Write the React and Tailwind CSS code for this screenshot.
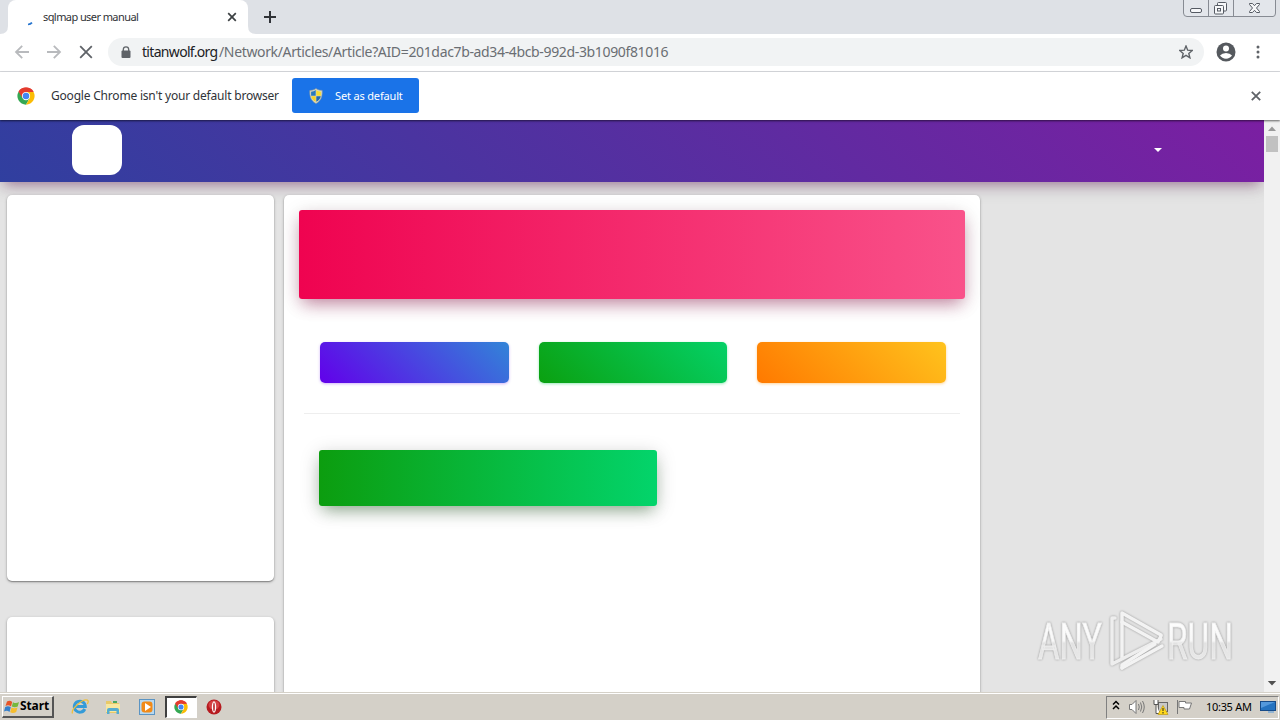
import React from "react";

function ChromeLogo({ size }) {
  return (
    <svg width={size} height={size} viewBox="0 0 48 48" className="shrink-0">
      <path d="M24 24L4.1 12.5A23 23 0 0 1 43.9 12.5Z" fill="#ea4335" />
      <path d="M4.1 12.5A23 23 0 0 0 24 47L34 29.5H24Z" fill="#34a853" />
      <path d="M43.9 12.5A23 23 0 0 1 24 47L34 29.8L24 13Z" fill="#fbbc05" />
      <path d="M24 13H44.2L43.9 12.5A23 23 0 0 0 4.1 12.5L14.5 29.5Z" fill="#e33b2e" />
      <circle cx="24" cy="24" r="11" fill="#fff" />
      <circle cx="24" cy="24" r="8.7" fill="#4285f4" />
    </svg>
  );
}

function Shield() {
  return (
    <svg width="14" height="16" viewBox="0 0 14 16" className="shrink-0">
      <path d="M7 .5C5 2 3 2.400 .8 2.400C.6 8 1.500 12.500 7 15.500C12.500 12.500 13.400 8 13.200 2.400C11 2.400 9 2 7 .5Z" fill="#d9d8c5" stroke="#8d9a9a" strokeWidth=".6" />
      <path d="M6.700 2V7.700H2.100V3.700Q5 3.500 6.700 2Z" fill="#2879bd" />
      <path d="M7.300 2V7.700H11.900V3.700Q9 3.500 7.300 2Z" fill="#f6dc31" />
      <path d="M6.700 8.300V13.800Q3 12 2.200 8.300Z" fill="#f6d326" />
      <path d="M7.300 8.300V13.800Q11 12 11.800 8.300Z" fill="#2369ad" />
    </svg>
  );
}

function TabStrip() {
  return (
    <div className="flex h-[34px] items-start justify-between bg-[#dee1e6]">
      <div className="flex h-[34px]">
        <svg width="8" height="34"><path d="M0 34Q8 34 8 26V34Z" fill="#fff" /></svg>
        <div className="flex h-[34px] w-[240px] items-center rounded-t-lg bg-white pl-[17px]">
          <svg width="12" height="12" viewBox="0 0 12 12" className="mt-2 shrink-0">
            <path d="M3 9.500Q5.500 9.300 7 7.700" stroke="#2775cf" strokeWidth="1.700" fill="none" />
          </svg>
          <span className="mb-[2px] w-[190px] pl-[6px] text-[11px] tracking-[-0.580px] whitespace-nowrap text-[#303236]">sqlmap user manual</span>
          <svg width="10" height="10" viewBox="0 0 10 10" className="shrink-0">
            <path d="M1.200 1.200L8.800 8.800M8.800 1.200L1.200 8.800" stroke="#3c4043" strokeWidth="1.700" />
          </svg>
        </div>
        <svg width="8" height="34"><path d="M0 26Q0 34 8 34H0Z" fill="#fff" /></svg>
        <svg width="12" height="12" viewBox="0 0 12 12" className="mt-[11px] ml-2">
          <path d="M6 0V12M0 6H12" stroke="#303338" strokeWidth="2" />
        </svg>
      </div>
      <svg width="97" height="18" viewBox="0 0 97 18">
        <path d="M.5 0V13Q.5 16.500 4 16.500H90Q92.500 16.500 92.500 13V0M25.500 0V16M50.500 0V16" fill="#e3e6eb" stroke="#878b93" />
        <g fill="#f6f7f9" stroke="#555a63">
          <rect x="7.500" y="8.500" width="11" height="4" rx="1.500" />
          <rect x="34.500" y="2.500" width="9" height="8.500" rx="1" />
          <rect x="31.500" y="5.500" width="9" height="8.500" rx="1" />
          <rect x="34.500" y="8.500" width="3" height="2.500" />
          <path d="M66.500 3.500H69.500L71.500 5.700L73.500 3.500H76.500V4.500L73.500 8L76.500 11.500V12.500H73.500L71.500 10.300L69.500 12.500H66.500V11.500L69.500 8L66.500 4.500Z" />
        </g>
      </svg>
    </div>
  );
}

function Toolbar() {
  return (
    <div className="flex h-[38px] items-center border-b border-[#dadce0] bg-white pb-px pl-[14px]">
      <svg width="16" height="16" viewBox="0 0 16 16" fill="none" stroke="#b8babd" strokeWidth="1.800">
        <path d="M15 8H2.500M8.200 1.800L2 8L8.200 14.200" />
      </svg>
      <svg width="16" height="16" viewBox="0 0 16 16" fill="none" stroke="#b8babd" strokeWidth="1.800" className="ml-4">
        <path d="M1 8H13.500M7.800 1.800L14 8L7.800 14.200" />
      </svg>
      <svg width="14" height="14" viewBox="0 0 14 14" className="ml-[17px]">
        <path d="M1.200 1.200L12.800 12.800M12.800 1.200L1.200 12.800" stroke="#5f6368" strokeWidth="1.800" />
      </svg>
      <div className="ml-[15px] flex h-7 w-[1096px] items-center rounded-full bg-[#f1f3f4] pr-[11px] pl-[13px]">
        <svg width="10" height="13" viewBox="0 0 10 13" className="shrink-0">
          <path d="M2.300 5.500V3.500A2.700 2.700 0 0 1 7.700 3.500V5.500" fill="none" stroke="#5f6368" strokeWidth="1.300" />
          <rect x=".5" y="4.500" width="9" height="7.500" rx="1" fill="#5f6368" />
        </svg>
        <div className="ml-[11px] flex flex-1 text-[14px] whitespace-nowrap text-[#6a6e73]">
          <span className="w-[77px] tracking-[-0.680px] text-[#202124]">titanwolf.org</span>
          <span className="tracking-[-0.350px]">/Network/Articles/Article?AID=201dac7b-ad34-4bcb-992d-3b1090f81016</span>
        </div>
        <svg width="14" height="14" viewBox="0 0 14 14" className="shrink-0">
          <path d="M7 1L8.700 5.200L13.200 5.500L9.800 8.400L10.900 12.800L7 10.400L3.100 12.800L4.200 8.400L.8 5.500L5.300 5.200Z" fill="none" stroke="#5f6368" strokeWidth="1.400" />
        </svg>
      </div>
      <svg width="20" height="20" viewBox="0 0 20 20" className="ml-3">
        <circle cx="10" cy="10" r="9.500" fill="#55595e" />
        <circle cx="10" cy="6.500" r="3" fill="#fff" />
        <path d="M4 13.600Q6 11 10 11T16 13.600Q14 16.700 10 16.700T4 13.600Z" fill="#fff" />
      </svg>
      <svg width="4" height="14" viewBox="0 0 4 14" className="ml-[20px]" fill="#5f6368">
        <circle cx="2" cy="2" r="1.500" /><circle cx="2" cy="7" r="1.500" /><circle cx="2" cy="12" r="1.500" />
      </svg>
    </div>
  );
}

function InfoBar() {
  return (
    <div className="relative z-10 flex h-12 items-center bg-white pl-[17px] shadow-[0_1px_2px_rgba(0,0,0,0.600)]">
      <ChromeLogo size={18} />
      <span className="mb-px ml-4 w-[241px] text-[12px] tracking-[-0.200px] whitespace-nowrap text-[#303338]">Google Chrome isn't your default browser</span>
      <div className="mb-[1px] flex h-[35px] w-[127px] items-center rounded-[3px] bg-[#1a73e8] pl-[17px]">
        <Shield />
        <span className="mb-px ml-3 text-[11px] tracking-[-0.160px] whitespace-nowrap text-white">Set as default</span>
      </div>
      <svg width="10" height="10" viewBox="0 0 10 10" className="mr-[19px] ml-auto">
        <path d="M.8 .8L9.200 9.200M9.200 .8L.8 9.200" stroke="#5f6368" strokeWidth="1.800" />
      </svg>
    </div>
  );
}

function Watermark() {
  return (
    <svg width="226" height="76" viewBox="0 0 226 76" className="absolute top-[490px] left-[1030px] drop-shadow-[0_0_1px_rgba(0,0,0,0.350)]">
      <defs>
        <linearGradient id="mark" x1="0" y1="0" x2="0" y2="1">
          <stop offset="0" stopColor="#fff" /><stop offset=".48" stopColor="#f8f8f8" />
          <stop offset=".52" stopColor="#e2e2e2" /><stop offset="1" stopColor="#eeeeee" />
        </linearGradient>
      </defs>
      <g fill="url(#mark)" stroke="#efefef" strokeWidth=".8" fontFamily="Roboto, sans-serif" fontSize="50">
        <text x="8" y="49" textLength="64" lengthAdjust="spacingAndGlyphs">ANY</text>
        <text x="137" y="49" textLength="66" lengthAdjust="spacingAndGlyphs">RUN</text>
      </g>
      <g fill="none" stroke="#f3f3f3" strokeWidth="3.500" strokeLinejoin="round" strokeLinecap="round">
        <path d="M92 48V3L131 25" />
        <path d="M85 8H82V54L131 29" stroke="#eeeeee" />
        <path d="M92 12L128 32L131 26M92 58L132 36" />
        <path d="M92 58V55L125 34" />
      </g>
    </svg>
  );
}

function ScrollBar() {
  return (
    <div className="flex h-full w-4 flex-col items-center justify-between bg-[#f1f1f1]">
      <div className="flex flex-col items-center">
        <svg width="10" height="16" viewBox="0 0 10 16"><path d="M1 11L5 6.500L9 11Z" fill="#999" /></svg>
        <div className="h-4 w-3 bg-[#c1c1c1]" />
      </div>
      <svg width="10" height="16" viewBox="0 0 10 16"><path d="M.8 5H9.200L5 9.500Z" fill="#505050" /></svg>
    </div>
  );
}

function Page() {
  const card = "rounded-[5px] bg-white shadow-[0_1px_3px_rgba(0,0,0,0.300),0_1px_1px_rgba(0,0,0,0.250)]";
  return (
    <div className="relative flex h-[572px] bg-[#e4e4e4]">
      <div className="flex h-full w-[1264px] flex-col overflow-hidden">
        <div className="flex h-[62px] shrink-0 items-center justify-between bg-[linear-gradient(45deg,#303f9f,#7b1fa2)] pr-[101px] pl-[72px] shadow-[0_4px_20px_rgba(0,0,0,0.140),0_7px_12px_-5px_rgba(123,31,102,0.460)]">
          <div className="mb-[2px] size-[50px] rounded-xl bg-white" />
          <svg width="10" height="6" viewBox="0 0 10 6" className="mb-[2px]"><path d="M1 1H9L5 5Z" fill="#fff" /></svg>
        </div>
        <div className="flex flex-1 gap-[10px] pt-[13px] pl-[7px]">
          <div className="flex w-[267px] flex-col gap-9">
            <div className={card + " h-[386px] shrink-0"} />
            <div className={card + " h-[100px] shrink-0"} />
          </div>
          <div className={card + " h-[520px] w-[696px] px-[15px] pt-[15px]"}>
            <div className="h-[89px] rounded-[3px] bg-[linear-gradient(90deg,#ef0350,#f9528a)] shadow-[0_4px_20px_rgba(0,0,0,0.140),0_8px_16px_-4px_rgba(173,20,87,0.450)]" />
            <div className="mx-[5px] mt-[43px] flex h-[72px] gap-[30px] border-b border-[#eeeeee] pr-[14px] pl-4">
              <div className="h-[41px] flex-1 rounded-[5px] bg-[linear-gradient(45deg,#6200ea,#3284d8)] shadow-[0_1px_3px_rgba(98,0,234,0.300)]" />
              <div className="h-[41px] flex-1 rounded-[5px] bg-[linear-gradient(45deg,#0ba010,#04d167)] shadow-[0_1px_3px_rgba(0,200,83,0.400)]" />
              <div className="h-[41px] flex-1 rounded-[5px] bg-[linear-gradient(45deg,#ff7900,#ffc31d)] shadow-[0_1px_3px_rgba(255,150,0,0.400)]" />
            </div>
            <div className="mt-9 ml-5 h-14 w-[338px] rounded-[3px] bg-[linear-gradient(90deg,#0c9d0f,#03d46b)] shadow-[0_4px_20px_rgba(0,0,0,0.180),0_8px_16px_-5px_rgba(20,100,20,0.400)]" />
          </div>
        </div>
      </div>
      <ScrollBar />
      <Watermark />
    </div>
  );
}

function TaskBar() {
  return (
    <div className="flex h-7 items-center border-t border-[#d5d1c8] bg-[#d4d0c8] pr-[1px] pl-[2px] shadow-[inset_0_1px_0_#fff]">
      <div className="mt-px flex h-[22px] w-[52px] items-center border-t border-r-2 border-b-2 border-l border-t-white border-r-[#555] border-b-[#555] border-l-white pl-[1px]">
        <svg width="16" height="16" viewBox="0 0 16 16" className="shrink-0">
          <path d="M3 2.500Q6 .8 8.200 3L7 7.500Q4.500 5.500 1.500 7Z" fill="#e75426" />
          <path d="M9 3.200Q12 5 15 3L13.700 7.500Q11 9 7.800 7.600Z" fill="#76b83c" />
          <path d="M1.200 8Q4.200 6.400 6.800 8.300L5.500 13Q3 11 0 12.500Z" fill="#357fca" />
          <path d="M7.500 8.500Q10.500 10 13.500 8.400L12.200 13Q9 14.800 6.200 13.200Z" fill="#f6bd2e" />
        </svg>
        <span className="mb-px text-[12px] font-bold tracking-[-0.100px] text-black">Start</span>
      </div>
      <svg width="18" height="18" viewBox="0 0 18 18" className="mt-px ml-[17px]">
        <path d="M13.800 11A5.500 5.500 0 1 1 14.300 8.500H4" fill="none" stroke="#349bd8" strokeWidth="3" />
        <path d="M1.500 15.500C-.5 11 12 .2 16.500 2.200C17.700 3 17.200 4.500 16.200 6" fill="none" stroke="#efbf3c" strokeWidth="1.300" />
      </svg>
      <svg width="18" height="18" viewBox="0 0 18 18" className="mt-px ml-[15px]">
        <path d="M2 3H7L8 5H15V15H2Z" fill="#e8c968" /><path d="M2 6H16V14H2Z" fill="#f7e7a0" />
        <path d="M3 16V12Q3 10 5 10H13Q15 10 15 12V16H12.500V13H5.500V16Z" fill="#55acd0" />
        <path d="M9 4H13" stroke="#49a762" strokeWidth="2" />
      </svg>
      <svg width="18" height="18" viewBox="0 0 18 18" className="mt-px ml-[16px]">
        <rect x="1.500" y="1.500" width="15" height="15" fill="#b8d8ef" stroke="#5b94c3" />
        <rect x="3.500" y="3.500" width="11" height="11" rx="3" fill="#f18a18" /><path d="M7 5V13L13 9Z" fill="#fff" />
      </svg>
      <div className="ml-[9px] flex h-[22px] w-8 items-center justify-center border-t-2 border-r border-b border-l-2 border-t-[#404040] border-r-white border-b-white border-l-[#404040] bg-white pr-[2px]">
        <ChromeLogo size={14} />
      </div>
      <svg width="16" height="16" viewBox="0 0 16 16" className="ml-[9px]">
        <circle cx="8" cy="8" r="7.500" fill="#b61b20" /><ellipse cx="8" cy="6" rx="5.500" ry="4.500" fill="#d54043" />
        <ellipse cx="8" cy="8" rx="2.200" ry="5.800" fill="#fff" /><ellipse cx="8" cy="8" rx=".8" ry="4.500" fill="#b61b20" />
      </svg>
      <div className="mt-px ml-auto flex h-[23px] w-[173px] items-center border border-t-[#808080] border-r-white border-b-white border-l-[#808080] pl-[5px]">
        <svg width="8" height="10" viewBox="0 0 8 10" className="mb-1 shrink-0">
          <path d="M1 4.500L4 1.500L7 4.500M1 9L4 6L7 9" fill="none" stroke="#000" strokeWidth="1.500" />
        </svg>
        <svg width="18" height="16" viewBox="0 0 18 16" className="ml-[8px] shrink-0" stroke="#777">
          <path d="M1.500 5.500H4L8 1.500V14.500L4 10.500H1.500Z" fill="#fff" />
          <path d="M10.500 5Q12 8 10.500 11M12.500 3.500Q15 8 12.500 12.500M14.500 2Q18 8 14.500 14" fill="none" />
        </svg>
        <svg width="18" height="16" viewBox="0 0 18 16" className="ml-[6px] shrink-0">
          <rect x="6.500" y="3.500" width="9" height="9" fill="#c8c8c8" stroke="#666" />
          <path d="M2 1V5.500H6V1M4 5.500V14.500H8" fill="#fff" stroke="#555" />
          <path d="M11 6.500L16 15.500H6Z" fill="#ffd91b" stroke="#bf9a13" strokeWidth=".7" />
          <path d="M11 9V12M11 13V14.500" stroke="#222" />
        </svg>
        <svg width="18" height="16" viewBox="0 0 18 16" className="ml-[6px] shrink-0">
          <path d="M1.500 1V15M3 2.500H9.500V4H15.500L13.500 10H8V8.500H3Z" fill="#fff" stroke="#777" />
        </svg>
        <span className="mb-px ml-[12px] w-[54px] text-[11px] tracking-[-0.300px] whitespace-nowrap text-black">10:35 AM</span>
        <svg width="16" height="14" viewBox="0 0 16 14" className="shrink-0">
          <rect x=".5" y="1.500" width="15" height="9" fill="#2573c0" stroke="#174b88" /><path d="M1 2H15L1 8Z" fill="#5499dc" />
          <path d="M8 12H14" stroke="#5499dc" />
        </svg>
      </div>
    </div>
  );
}

export default function App() {
  return (
    <div className="flex h-[720px] w-[1280px] flex-col overflow-hidden bg-white font-['Noto_Sans',sans-serif] leading-none">
      <TabStrip />
      <Toolbar />
      <InfoBar />
      <Page />
      <TaskBar />
    </div>
  );
}
